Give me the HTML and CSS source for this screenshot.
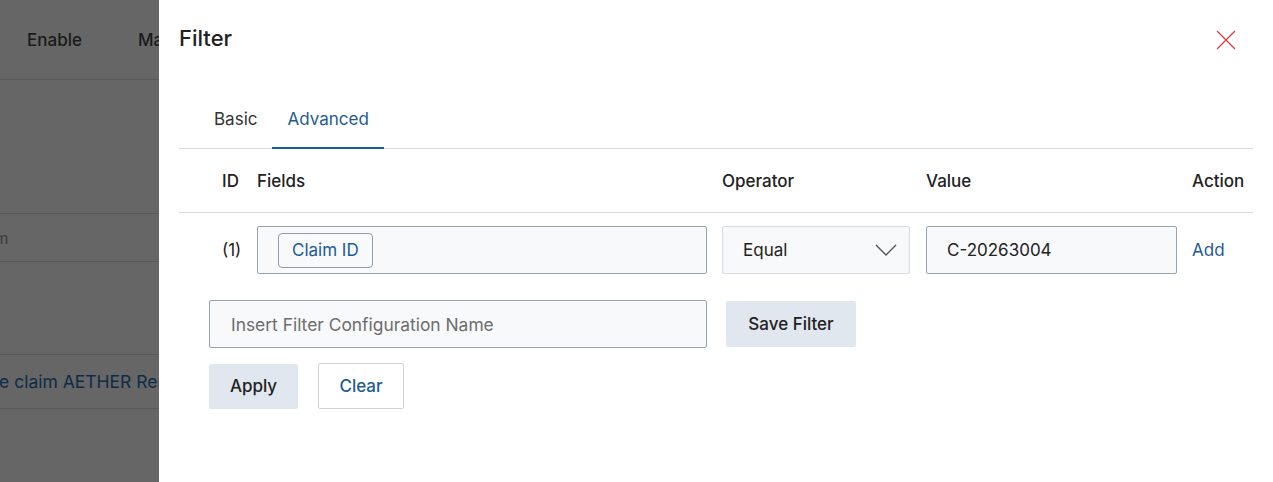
FILE: index.html
```html
<!DOCTYPE html>
<html lang="en">
<head>
    <meta charset="UTF-8">
    <meta name="viewport" content="width=device-width, initial-scale=1.0">
    <title>Claims - Filter</title>
    <link rel="stylesheet" href="styles.css">
</head>
<body>
    <div class="page">
        <div class="page-header">
            <span class="page-col">Enable</span>
            <span class="page-col">Manage</span>
        </div>
        <div class="page-search">Search claim</div>
        <div class="page-row">Update the claim AETHER Response</div>
    </div>

    <div class="drawer">
        <div class="drawer-head">
            <h2>Filter</h2>
            <span class="close-btn">
                <svg width="20" height="20" viewBox="0 0 20 20">
                    <path d="M1 1 L19 19 M19 1 L1 19" stroke="#d23c3c" stroke-width="1.2" fill="none"/>
                </svg>
            </span>
        </div>

        <div class="tabs">
            <div class="tab">Basic</div>
            <div class="tab active">Advanced</div>
        </div>

        <div class="grid grid-head">
            <div class="col-id">ID</div>
            <div>Fields</div>
            <div>Operator</div>
            <div>Value</div>
            <div>Action</div>
        </div>

        <div class="grid grid-row">
            <div class="col-id">(1)</div>
            <div><div class="field-box"><span class="chip">Claim ID</span></div></div>
            <div>
                <div class="select-box">
                    <span>Equal</span>
                    <svg width="22" height="14" viewBox="0 0 22 14">
                        <path d="M1 2 L11 12 L21 2" stroke="#555" stroke-width="1.4" fill="none"/>
                    </svg>
                </div>
            </div>
            <div><input class="value-box" type="text" value="C-20263004"></div>
            <div><a href="#" class="link">Add</a></div>
        </div>

        <div class="form-actions">
            <div class="save-row">
                <input class="name-input" type="text" placeholder="Insert Filter Configuration Name">
                <button class="btn btn-save">Save Filter</button>
            </div>
            <div class="btn-row">
                <button class="btn btn-apply">Apply</button>
                <button class="btn btn-clear">Clear</button>
            </div>
        </div>
    </div>
</body>
</html>
```

FILE: styles.css
```css
* {
    box-sizing: border-box;
}

body {
    font-family: Inter, "Noto Sans", Arial, sans-serif;
    margin: 0;
    width: 1273px;
    height: 482px;
    overflow: hidden;
    background-color: #666666; /* page behind the overlay */
    color: #222;
}

/* dimmed page behind the drawer */
.page {
    white-space: nowrap;
}

.page-header {
    height: 80px;
    border-bottom: 1px solid #595959;
    display: flex;
    align-items: center;
    padding-left: 27px;
    gap: 56px;
    font-size: 17px;
    font-weight: 500;
    color: #1a1a1a;
}

.page-search {
    margin-top: 133px;
    margin-left: -89px;
    height: 49px;
    border-top: 1px solid #595959;
    border-bottom: 1px solid #595959;
    display: flex;
    align-items: center;
    color: #3c3c3c;
    font-size: 16px;
}

.page-row {
    margin-top: 92px;
    margin-left: -82px;
    height: 55px;
    border-top: 1px solid #595959;
    border-bottom: 1px solid #595959;
    display: flex;
    align-items: center;
    font-size: 17.5px;
    color: #0f2b47;
}

/* drawer */
.drawer {
    position: fixed;
    top: 0;
    right: 0;
    width: 1114px;
    height: 482px;
    background: #fff;
    padding: 0 20px;
}

.drawer-head {
    display: flex;
    justify-content: space-between;
    align-items: center;
    height: 75px;
    margin-bottom: 15px;
}

.drawer-head h2 {
    margin: 0;
    font-size: 22px;
    font-weight: 500;
    color: #222;
}

.close-btn {
    display: flex;
    margin-right: 17px;
    margin-top: 5px;
    cursor: pointer;
}

.tabs {
    display: flex;
    padding-left: 20px;
    border-bottom: 1px solid #d3dae2;
}

.tab {
    padding: 19px 15px 18px;
    font-size: 17px;
    color: #333;
    cursor: pointer;
}

.tab.active {
    color: #1d5b94;
    border-bottom: 2px solid #1d5b94;
    margin-bottom: -1px;
}

.grid {
    display: grid;
    grid-template-columns: 78px 465px 204px 266px auto;
    align-items: center;
    font-size: 17px;
}

.grid-head {
    height: 64px;
    font-weight: 500;
    color: #222;
    border-bottom: 1px solid #d3dae2;
}

.col-id {
    padding-left: 43px;
}

.grid-row {
    padding-top: 13px;
}

.field-box {
    width: 450px;
    height: 48px;
    border: 1px solid #98a3b1;
    border-radius: 2px;
    background: #f7f9fb;
    display: flex;
    align-items: center;
    padding-left: 20px;
}

.chip {
    display: inline-block;
    height: 35px;
    line-height: 33px;
    padding: 0 13px;
    border: 1px solid #8e9cad;
    border-radius: 4px;
    color: #1d5b94;
    font-size: 17px;
}

.select-box {
    width: 188px;
    height: 48px;
    border: 1px solid #d7dce2;
    border-radius: 2px;
    background: #f7f9fb;
    display: flex;
    align-items: center;
    justify-content: space-between;
    padding: 0 12px 0 20px;
    color: #222;
}

input {
    font-family: inherit;
    font-size: 17px;
    color: #222;
    outline: none;
}

.value-box {
    width: 251px;
    height: 48px;
    border: 1px solid #98a3b1;
    border-radius: 2px;
    background: #f7f9fb;
    padding: 0 20px;
}

.link {
    color: #1d5b94;
    text-decoration: none;
}

.form-actions {
    padding-left: 30px;
    padding-top: 26px;
}

.save-row {
    display: flex;
    align-items: center;
    gap: 19px;
}

.name-input {
    width: 498px;
    height: 48px;
    border: 1px solid #98a3b1;
    border-radius: 2px;
    background: #f7f9fb;
    padding: 0 21px;
    font-size: 17.4px;
}

.name-input::placeholder {
    color: #6d6d6d;
}

.btn-row {
    display: flex;
    align-items: center;
    gap: 20px;
    margin-top: 15px;
}

.btn {
    font-family: inherit;
    font-size: 17px;
    font-weight: 500;
    border: none;
    border-radius: 2px;
    cursor: pointer;
}

.btn-save {
    width: 130px;
    height: 46px;
    background: #e1e7ee;
    color: #222;
}

.btn-apply {
    width: 89px;
    height: 45px;
    background: #e1e7ee;
    color: #222;
}

.btn-clear {
    width: 86px;
    height: 46px;
    background: #fff;
    border: 1px solid #ccd3db;
    color: #1d5b94;
}
```
